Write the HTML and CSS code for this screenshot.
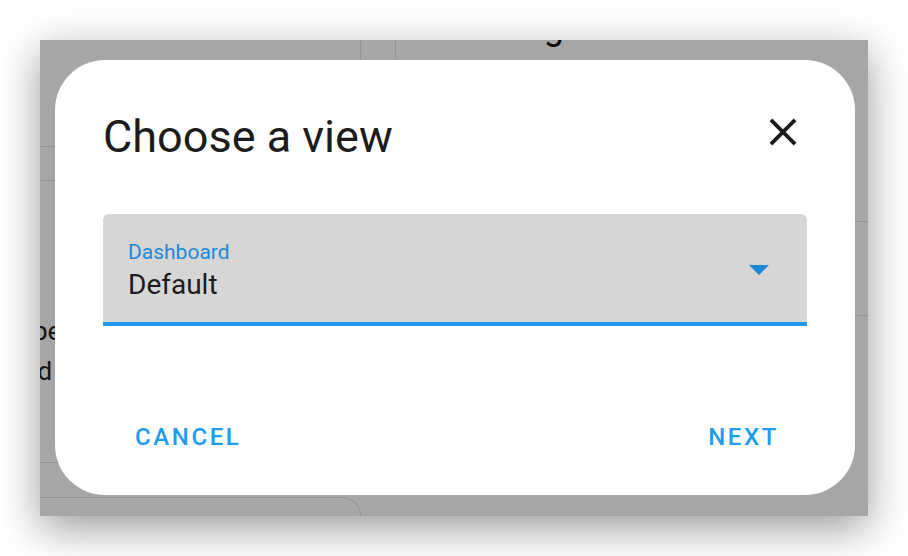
FILE: index.html
```html
<!DOCTYPE html>
<html lang="en">
<head>
  <meta charset="UTF-8">
  <title>Choose a view</title>
  <link rel="stylesheet" href="styles.css">
</head>
<body>

  <div class="screen">
    <!-- page behind the dialog -->
    <div class="page">
      <div class="col col-left">
        <div class="card card-top">
          <div class="row"></div>
        </div>
        <div class="bg-lines">
          <p class="bg-text">Type</p>
          <p class="bg-text">Add</p>
        </div>
        <div class="divider"></div>
        <div class="card card-bottom"></div>
      </div>
      <div class="col col-right">
        <h2 class="bg-heading">Settings</h2>
        <div class="card card-right">
          <div class="row tall"></div>
          <div class="row mid"></div>
        </div>
      </div>
    </div>

    <!-- dim layer + dialog -->
    <div class="backdrop">
      <div class="dialog">
        <div class="dialog-header">
          <h1>Choose a view</h1>
          <button class="close" aria-label="Close">
            <svg viewBox="0 0 24 24" width="46" height="46">
              <path d="M19 6.41L17.59 5 12 10.59 6.41 5 5 6.41 10.59 12 5 17.59 6.41 19 12 13.41 17.59 19 19 17.59 13.41 12z" fill="#1c1c1c"/>
            </svg>
          </button>
        </div>

        <div class="select">
          <div class="select-text">
            <span class="select-label">Dashboard</span>
            <span class="select-value">Default</span>
          </div>
          <span class="select-arrow"></span>
        </div>

        <div class="dialog-actions">
          <button class="text-btn">Cancel</button>
          <button class="text-btn next">Next</button>
        </div>
      </div>
    </div>
  </div>

</body>
</html>
```

FILE: styles.css
```css
body {
  font-family: Roboto, "Noto Sans", sans-serif;
  background-color: #ffffff;
  margin: 0;
  padding: 40px;
}
.screen {
  position: relative;
  width: 828px;
  height: 476px;
  overflow: hidden;
  background: #ffffff;
  box-shadow: 0 12px 40px rgba(0, 0, 0, 0.4);
}

/* background page */
.page {
  display: grid;
  grid-template-columns: 321px 1fr;
  column-gap: 34px;
  height: 100%;
}
.col {
  display: flex;
  flex-direction: column;
}
.card {
  border: 1px solid #e0e0e0;
}
.card-top {
  border-left: none;
  border-top: none;
  padding-top: 106px;
}
.card-top .row {
  height: 33px;
  border-top: 1px solid #e0e0e0;
}
.bg-lines {
  margin-top: 130px;
  margin-left: -34px;
}
.bg-text {
  margin: 0;
  font-size: 26px;
  line-height: 40px;
  color: #222;
}
.divider {
  margin-top: 71px;
  border-top: 1px solid #e0e0e0;
}
.card-bottom {
  margin-top: 34px;
  flex: 1;
  border-left: none;
  border-bottom: none;
  border-top-right-radius: 22px;
}
.bg-heading {
  margin: -33px 0 0 56px;
  font-size: 36px;
  font-weight: 400;
  line-height: 40px;
  color: #111;
}
.card-right {
  border-right: none;
  border-top: none;
  border-bottom: none;
  margin-top: -10px;
}
.card-right .tall {
  height: 184px;
  border-bottom: 1px solid #e0e0e0;
}
.card-right .mid {
  height: 93px;
  border-bottom: 1px solid #e0e0e0;
}

/* overlay */
.backdrop {
  position: absolute;
  inset: 0;
  background: rgba(0, 0, 0, 0.35);
  display: flex;
  align-items: center;
  justify-content: center;
}
.dialog {
  width: 800px;
  box-sizing: border-box;
  padding: 51px 48px 28px;
  margin-left: 2px;
  margin-top: -1px;
  background: #ffffff;
  border-radius: 50px;
}
.dialog-header {
  display: flex;
  align-items: center;
  justify-content: space-between;
}
.dialog-header h1 {
  margin: 0;
  font-size: 45px;
  font-weight: 400;
  line-height: 52px;
  color: #1c1c1c;
}
.close {
  border: none;
  background: none;
  padding: 0;
  margin: -11px 1px 0 0;
  width: 46px;
  height: 46px;
  display: flex;
}

.select {
  margin-top: 51px;
  height: 108px;
  background: #d6d6d6;
  border-radius: 6px 6px 0 0;
  border-bottom: 4px solid #1e97ee;
  display: flex;
  align-items: center;
  justify-content: space-between;
  padding: 0 38px 0 25px;
}
.select-text {
  display: flex;
  flex-direction: column;
  margin-top: 4px;
}
.select-label {
  font-size: 21px;
  line-height: 24px;
  color: #1c89da;
}
.select-value {
  margin-top: 5px;
  font-size: 28px;
  line-height: 32px;
  color: #1c1c1c;
}
.select-arrow {
  width: 0;
  height: 0;
  border-left: 10px solid transparent;
  border-right: 10px solid transparent;
  border-top: 10px solid #1a87d7;
  margin-top: 3px;
}

.dialog-actions {
  margin-top: 81px;
  display: flex;
  justify-content: space-between;
}
.text-btn {
  border: none;
  background: none;
  padding: 12px 32px;
  font-family: Roboto, sans-serif;
  font-size: 24px;
  font-weight: 500;
  line-height: 36px;
  letter-spacing: 2.6px;
  text-transform: uppercase;
  color: #1f9cf0;
}
.text-btn.next {
  padding-right: 28px;
}
```
